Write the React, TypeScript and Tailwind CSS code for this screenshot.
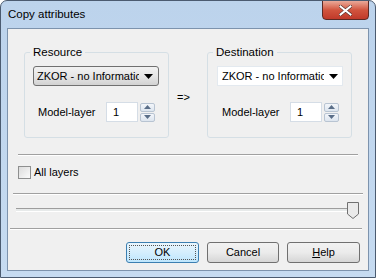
import React from "react";

function Spinner() {
  return (
    <div className="flex flex-col gap-[1px] ml-[2px]">
      {["up", "down"].map((d) => (
        <div
          key={d}
          className="w-[15px] h-[9px] border border-[#b8c4d2] rounded-[2px] bg-gradient-to-b from-[#f3f6fa] to-[#dde5ef] flex items-center justify-center"
        >
          <svg width="7" height="4" viewBox="0 0 7 4">
            {d === "up" ? (
              <path d="M0 4 L3.5 0 L7 4 Z" fill="#5a6e88" />
            ) : (
              <path d="M0 0 L3.5 4 L7 0 Z" fill="#5a6e88" />
            )}
          </svg>
        </div>
      ))}
    </div>
  );
}

function Arrow() {
  return (
    <svg width="9" height="5" viewBox="0 0 9 5" className="shrink-0">
      <path d="M0 0 L9 0 L4.5 5 Z" fill="#000" />
    </svg>
  );
}

function Group({ title, gray, pad }: { title: string; gray?: boolean; pad: string }) {
  return (
    <fieldset className="w-[145px] h-[93px] border border-[#d5dfe5] rounded-[3px] m-0 p-0 min-w-0">
      <legend className="ml-[5px] px-[3px] leading-[14px] text-[11.5px]">{title}</legend>
      <div className={`flex flex-col ${pad}`}>
        <div
          className={
            gray
              ? "mt-[7px] w-[126px] h-[20px] border border-[#707070] rounded-[3px] bg-gradient-to-b from-[#f2f2f2] via-[#e6e6e6] to-[#d2d2d2] flex items-center pl-[3px] pr-[5px]"
              : "mt-[7px] w-[126px] h-[20px] border border-[#e3e9ef] bg-white flex items-center pl-[4px] pr-[4px]"
          }
        >
          <span className="flex-1 overflow-hidden whitespace-nowrap">ZKOR - no Information</span>
          <span className="w-[5px]" />
          <Arrow />
        </div>
        <div className="flex items-center mt-[16px]">
          <span className="w-[73px] pl-[5px] whitespace-nowrap">Model-layer</span>
          <div className="w-[32px] h-[20px] border border-[#d5dde6] bg-white flex items-center pl-[6px]">1</div>
          <Spinner />
        </div>
      </div>
    </fieldset>
  );
}

function Separator({ className }: { className: string }) {
  return <div className={`h-[2px] border-t border-[#a0a0a0] border-b border-b-white ${className}`} />;
}

export default function App() {
  return (
    <div
      className="w-[376px] h-[278px] bg-gradient-to-b from-[#bcd3ec] to-[#c6dbf1] border border-[#4b5b70] rounded-t-[7px] flex flex-col text-[11px] text-black overflow-hidden"
      style={{ fontFamily: '"Liberation Sans", Arial, sans-serif' }}
    >
      {/* Title bar */}
      <div className="h-[27px] relative flex items-center pl-[7px]">
        <span className="text-[11.5px] leading-none">Copy attributes</span>
        <div className="absolute top-[-1px] right-[6px] w-[47px] h-[20px] rounded-b-[4px] border border-[#5c2a24] bg-gradient-to-b from-[#e9a999] via-[#d1543e] to-[#c0392a] flex items-center justify-center">
          <svg width="13" height="11" viewBox="0 0 13 11">
            <path d="M1.5 1.5 L11.5 9.5 M11.5 1.5 L1.5 9.5" stroke="#4a2a26" strokeWidth="3.2" strokeLinecap="square" />
            <path d="M1.5 1.5 L11.5 9.5 M11.5 1.5 L1.5 9.5" stroke="#fff" strokeWidth="2" strokeLinecap="square" />
          </svg>
        </div>
      </div>

      {/* Client area */}
      <div className="mx-[6px] border border-[#7d93ad] bg-[#f0f0f0] h-[243px] flex flex-col">
        <div className="flex items-start pl-[16px] pt-[16px]">
          <Group title="Resource" gray pad="pl-[8px]" />
          <div className="w-[38px] pt-[44px] pl-[8px]">=&gt;</div>
          <Group title="Destination" pad="pl-[9px]" />
        </div>

        <Separator className="ml-[10px] w-[340px] mt-[16px]" />

        <label className="flex items-center ml-[10px] mt-[8px] gap-[3px]">
          <span className="w-[13px] h-[13px] border border-[#8e8f8f] bg-gradient-to-br from-[#dcdcdc] to-[#fbfbfb]" />
          <span>All layers</span>
        </label>

        <Separator className="ml-[5px] w-[350px] mt-[12px]" />

        <div className="flex items-center ml-[8px] mt-[7px] w-[343px] h-[17px]">
          <div className="flex-1 h-[4px] border-t border-[#9d9d9d] border-b border-b-white bg-[#e7eaea]" />
          <svg width="12" height="17" viewBox="0 0 12 17" className="-ml-[4px]">
            <path d="M0.5 0.5 H11.5 V12 L6 16.5 L0.5 12 Z" fill="#eaeaea" stroke="#707070" />
          </svg>
        </div>

        <Separator className="ml-[2px] w-[352px] mt-[9px]" />

        <div className="flex justify-end gap-[8px] pr-[8px] mt-[12px]">
          <button className="w-[73px] h-[21px] rounded-[3px] border border-[#3c7fb1] bg-gradient-to-b from-[#eaf6fd] to-[#bee6fd] p-[2px] flex">
            <span className="flex-1 border border-dotted border-[#555] flex items-center justify-center leading-none">OK</span>
          </button>
          <button className="w-[72px] h-[21px] rounded-[3px] border border-[#707070] bg-gradient-to-b from-[#f2f2f2] via-[#ebebeb] to-[#d6d6d6]">
            Cancel
          </button>
          <button className="w-[73px] h-[21px] rounded-[3px] border border-[#707070] bg-gradient-to-b from-[#f2f2f2] via-[#ebebeb] to-[#d6d6d6]">
            <span className="underline">H</span>elp
          </button>
        </div>
      </div>
    </div>
  );
}
